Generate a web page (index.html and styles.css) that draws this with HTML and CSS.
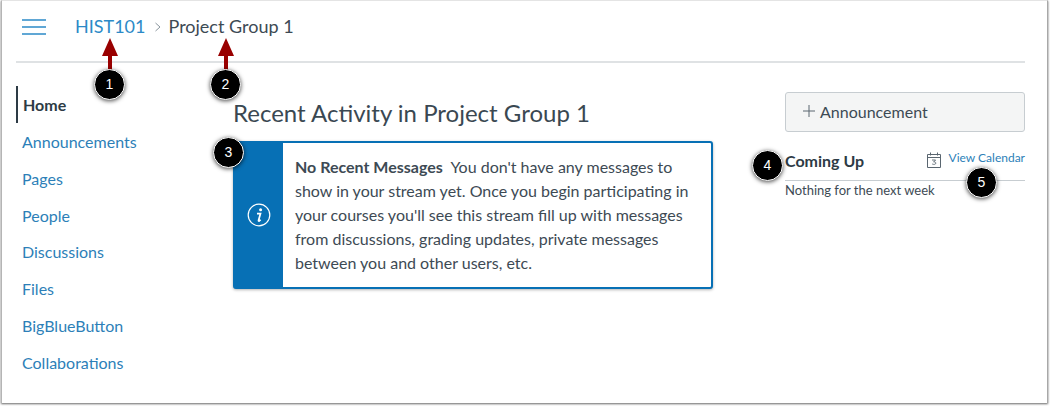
FILE: index.html
```html
<!DOCTYPE html>
<html lang="en">
<head>
  <meta charset="UTF-8" />
  <title>Project Group 1</title>
  <link rel="stylesheet" href="styles.css">
</head>
<body>
  <div class="frame">
    <header class="topbar">
      <svg class="menu-icon" width="26" height="18" viewBox="0 0 26 18">
        <path d="M1 2h24M1 9h24M1 16h24" stroke="#2d8ac7" stroke-width="1.6" fill="none" />
      </svg>
      <a class="crumb-link">HIST101</a>
      <svg class="crumb-sep" width="8" height="10" viewBox="0 0 8 10">
        <path d="M1.5 1l4.5 4-4.5 4" stroke="#8b969e" stroke-width="1" fill="none" />
      </svg>
      <span class="crumb-current">Project Group 1</span>
    </header>

    <div class="columns">
      <nav class="sidenav">
        <a class="nav-item active">Home</a>
        <a class="nav-item">Announcements</a>
        <a class="nav-item">Pages</a>
        <a class="nav-item">People</a>
        <a class="nav-item">Discussions</a>
        <a class="nav-item">Files</a>
        <a class="nav-item">BigBlueButton</a>
        <a class="nav-item">Collaborations</a>
      </nav>

      <main class="content">
        <h1>Recent Activity in Project Group 1</h1>
        <div class="alert">
          <div class="alert-side">
            <svg width="24" height="24" viewBox="0 0 24 24">
              <circle cx="12" cy="12" r="10.8" stroke="#fff" stroke-width="1.2" fill="none" />
              <circle cx="13.6" cy="6.8" r="1.5" fill="#fff" />
              <path d="M10 10.6h3.5l-2 6.9c-.1.6.3.7.8.4l1.4-1" stroke="#fff" stroke-width="1.7" fill="none" />
            </svg>
          </div>
          <p class="alert-text"><b>No Recent Messages</b>&nbsp; You don't have any messages to show in your stream yet. Once you begin participating in your courses you'll see this stream fill up with messages from discussions, grading updates, private messages between you and other users, etc.</p>
        </div>
      </main>

      <aside class="sidebar">
        <button class="btn-announce">
          <svg width="12" height="12" viewBox="0 0 12 12">
            <path d="M6 0v12M0 6h12" stroke="#5a6670" stroke-width="1" fill="none" />
          </svg>
          Announcement
        </button>
        <div class="coming-head">
          <h2>Coming Up</h2>
          <a class="view-cal">
            <svg width="16" height="16" viewBox="0 0 16 16">
              <path d="M1.5 2.5h13v13h-13zM1.5 5.5h13M4.5 .5v3M11.5 .5v3" stroke="#5a6670" stroke-width="1" fill="none" />
              <path d="M6 8h3.6L7.6 10c1.4-.3 2.2.3 2.2 1.2 0 1.2-2 1.6-3.6.8" stroke="#5a6670" stroke-width=".9" fill="none" />
            </svg>
            <span>View Calendar</span>
          </a>
        </div>
        <p class="coming-note">Nothing for the next week</p>
      </aside>
    </div>

    <!-- callouts added over the screenshot -->
    <svg class="arrow arrow-1" width="16" height="32" viewBox="0 0 16 32">
      <path d="M8 0l8 18H10v14H6V18H0z" fill="#990000" />
    </svg>
    <svg class="arrow arrow-2" width="16" height="32" viewBox="0 0 16 32">
      <path d="M8 0l8 18H10v14H6V18H0z" fill="#990000" />
    </svg>
    <span class="badge badge-1">1</span>
    <span class="badge badge-2">2</span>
    <span class="badge badge-3">3</span>
    <span class="badge badge-4">4</span>
    <span class="badge badge-5">5</span>
  </div>
</body>
</html>
```

FILE: styles.css
```css
* {
  box-sizing: border-box;
}
html, body {
  height: 100%;
}
body {
  margin: 0;
  background-color: #fff;
  font-family: 'Lato', sans-serif;
  color: #2d3b45;
  overflow: hidden;
}
.frame {
  position: relative;
  width: 1047px;
  height: 403px;
  margin-left: 1px;
  padding-left: 14px;
  padding-right: 22px;
  background-color: #fff;
  border-left: 1px solid #b5b5b5;
  border-right: 1px solid #a8a8a8;
  border-top: 1px solid #e4e4e4;
  box-shadow: 0 1px 2px rgba(0,0,0,0.6);
}

/* top bar */
.topbar {
  display: flex;
  align-items: center;
  height: 62px;
  padding-left: 5px;
  padding-bottom: 10px;
  border-bottom: 2px solid #dfe2e4;
}
.menu-icon {
  margin-top: 2px;
  margin-right: 28px;
}
.crumb-link {
  color: #2d8ac7;
  font-size: 18px;
}
.crumb-sep {
  margin: 2px 7px 0 8px;
}
.crumb-current {
  font-size: 18px;
  color: #3d4a54;
}

.columns {
  display: flex;
}

/* left nav */
.sidenav {
  display: flex;
  flex-direction: column;
  width: 217px;
  padding-top: 23px;
}
.nav-item {
  height: 36.85px;
  line-height: 37px;
  padding-left: 6px;
  font-size: 16px;
  color: #2d7fb8;
}
.nav-item.active {
  color: #2d3b45;
  font-weight: bold;
  border-left: 2px solid #2d3b45;
  padding-left: 5px;
}

/* middle */
.content {
  width: 552px;
  padding-top: 35px;
}
h1 {
  margin: 0;
  font-size: 24px;
  font-weight: normal;
  line-height: 30px;
  color: #3a4852;
}
.alert {
  display: flex;
  width: 480px;
  height: 148px;
  margin-top: 13px;
  background-color: #fff;
  border: 2px solid #0770b5;
  border-radius: 3px;
  box-shadow: 0 1px 3px rgba(0,0,0,0.3);
}
.alert-side {
  display: flex;
  align-items: center;
  justify-content: center;
  flex: 0 0 48px;
  background-color: #0770b5;
}
.alert-text {
  margin: 0;
  padding: 12px 10px 0 12px;
  font-size: 16px;
  line-height: 24px;
  color: #3d4a54;
}

/* right column */
.sidebar {
  width: 240px;
  padding-top: 29px;
}
.btn-announce {
  display: flex;
  align-items: center;
  gap: 5px;
  width: 100%;
  height: 40px;
  padding: 0 0 2px 17px;
  font-family: 'Lato', sans-serif;
  font-size: 16px;
  color: #3d4a54;
  background-color: #f4f5f5;
  border: 1px solid #c7cdd1;
  border-radius: 3px;
}
.coming-head {
  display: flex;
  justify-content: space-between;
  align-items: flex-start;
  height: 49px;
  padding-top: 19px;
  border-bottom: 1px solid #c7cdd1;
}
h2 {
  margin: 0;
  font-size: 16px;
  line-height: 20px;
  font-weight: bold;
  color: #2d3b45;
}
.view-cal {
  display: flex;
  align-items: flex-start;
  gap: 7px;
  color: #2d7fb8;
  font-size: 12px;
  line-height: 14px;
}
.view-cal svg {
  margin-top: 1px;
}
.coming-note {
  margin: 0;
  font-size: 13px;
  line-height: 18px;
  color: #3d4a54;
}

/* callouts */
.arrow {
  position: absolute;
  top: 37px;
}
.arrow-1 { left: 100px; }
.arrow-2 { left: 216px; }
.badge {
  position: absolute;
  width: 31px;
  height: 31px;
  line-height: 29px;
  text-align: center;
  font-family: 'Liberation Sans', sans-serif;
  font-size: 14px;
  color: #fff;
  background-color: #000;
  border: 1px solid #fff;
  border-radius: 50%;
  box-shadow: 0 1px 4px rgba(0,0,0,0.7);
}
.badge-1 { left: 92px; top: 68px; }
.badge-2 { left: 208px; top: 68px; }
.badge-3 { left: 211px; top: 136px; }
.badge-4 { left: 750px; top: 149px; }
.badge-5 { left: 964px; top: 166px; }
```
